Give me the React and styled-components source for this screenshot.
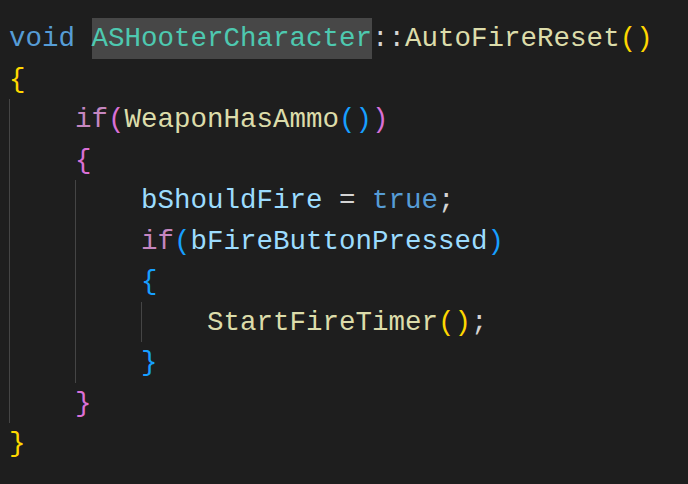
import styled, { createGlobalStyle } from "styled-components";

const Global = createGlobalStyle`
    html, body {
        margin: 0;
        background: #1e1e1e;
    }
`;

const colors = {
    keyword: "#569cd6",
    type: "#4ec9b0",
    plain: "#d4d4d4",
    func: "#dcdcaa",
    control: "#c586c0",
    variable: "#9cdcfe",
    gold: "#ffd700",
    orchid: "#da70d6",
    blue: "#179fff",
};

// [indent, [[text, color, highlighted?], ...]]
const lines = [
    [0, [["void", "keyword"], [" ", "plain"], ["ASHooterCharacter", "type", true], ["::", "plain"], ["AutoFireReset", "func"], ["()", "gold"]]],
    [0, [["{", "gold"]]],
    [1, [["if", "control"], ["(", "orchid"], ["WeaponHasAmmo", "func"], ["()", "blue"], [")", "orchid"]]],
    [1, [["{", "orchid"]]],
    [2, [["bShouldFire", "variable"], [" = ", "plain"], ["true", "keyword"], [";", "plain"]]],
    [2, [["if", "control"], ["(", "blue"], ["bFireButtonPressed", "variable"], [")", "blue"]]],
    [2, [["{", "blue"]]],
    [3, [["StartFireTimer", "func"], ["()", "gold"], [";", "plain"]]],
    [2, [["}", "blue"]]],
    [1, [["}", "orchid"]]],
    [0, [["}", "gold"]]],
];

export default function App() {
    return (
        <>
            <Global />
            <Editor>
                {lines.map(([indent, tokens], i) => (
                    <Line key={i}>
                        {Array.from({ length: indent }).map((_, j) => (
                            <Guide key={j} />
                        ))}
                        {tokens.map(([text, color, hl], k) => (
                            <Token key={k} $color={colors[color]} $highlight={hl}>
                                {text}
                            </Token>
                        ))}
                    </Line>
                ))}
            </Editor>
        </>
    );
}

const Editor = styled.div`
    box-sizing: border-box;
    height: 484px;
    padding: 18px 0 0 9px;
    background: #1e1e1e;
    font-family: "Liberation Mono", "DejaVu Sans Mono", monospace;
    font-size: 27.5px;
`;

const Line = styled.div`
    display: flex;
    height: 40.5px;
`;

const Guide = styled.span`
    width: 4ch;
    flex-shrink: 0;
    box-shadow: inset 1px 0 0 #454545;
`;

const Token = styled.span`
    white-space: pre;
    padding-top: 2px;
    line-height: 38.5px;
    color: ${props => props.$color};
    background: ${props => props.$highlight ? "#474747" : "transparent"};
`;
